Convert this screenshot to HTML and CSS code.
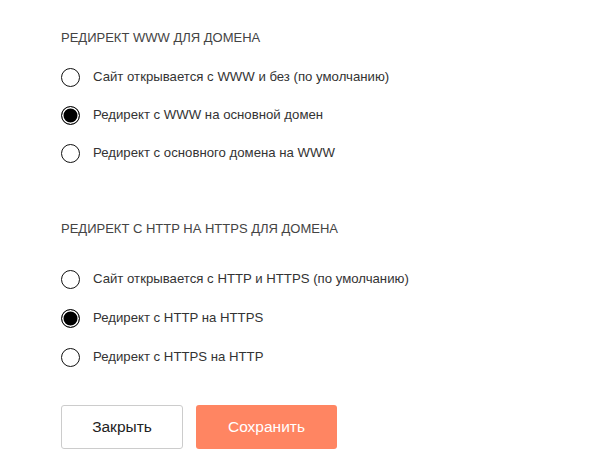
FILE: index.html
```html
<!DOCTYPE html>
<html lang="ru">
<head>
<meta charset="utf-8">
<link rel="stylesheet" href="styles.css">
</head>
<body>
<div class="form">
  <section class="group group-www">
    <h3 class="title">РЕДИРЕКТ WWW ДЛЯ ДОМЕНА</h3>
    <div class="options">
      <label class="option"><span class="radio"></span><span class="label">Сайт открывается с WWW и без (по умолчанию)</span></label>
      <label class="option"><span class="radio checked"></span><span class="label">Редирект с WWW на основной домен</span></label>
      <label class="option"><span class="radio"></span><span class="label">Редирект с основного домена на WWW</span></label>
    </div>
  </section>
  <section class="group group-https">
    <h3 class="title">РЕДИРЕКТ С HTTP НА HTTPS ДЛЯ ДОМЕНА</h3>
    <div class="options">
      <label class="option"><span class="radio"></span><span class="label">Сайт открывается с HTTP и HTTPS (по умолчанию)</span></label>
      <label class="option"><span class="radio checked"></span><span class="label">Редирект с HTTP на HTTPS</span></label>
      <label class="option"><span class="radio"></span><span class="label">Редирект с HTTPS на HTTP</span></label>
    </div>
  </section>
  <div class="actions">
    <button class="btn btn-close">Закрыть</button>
    <button class="btn btn-save">Сохранить</button>
  </div>
</div>
</body>
</html>
```
FILE: styles.css
```css
html, body {
  margin: 0;
  padding: 0;
  background: #fff;
}
body {
  font-family: "Liberation Sans", Arial, sans-serif;
  color: #333;
}
.form {
  padding: 29px 0 0 61px;
  display: flex;
  flex-direction: column;
}
.title {
  margin: 0;
  font-weight: normal;
  font-size: 13px;
  line-height: 18px;
  color: #444;
}
.options {
  display: flex;
  flex-direction: column;
  gap: 18px;
}
.group-www .options {
  margin-top: 20px;
}
.group-https {
  margin-top: 57px;
}
.group-https .options {
  margin-top: 31px;
  gap: 19px;
}
.option {
  display: flex;
  align-items: center;
  gap: 13px;
  height: 20px;
}
.radio {
  box-sizing: border-box;
  width: 19px;
  height: 19px;
  border: 1.5px solid #111;
  border-radius: 50%;
  background: #fff;
  flex: none;
}
.radio.checked {
  background: #000;
  box-shadow: inset 0 0 0 1.5px #fff;
}
.label {
  font-size: 13.2px;
  line-height: 18px;
  color: #333;
}
.actions {
  display: flex;
  gap: 13px;
  margin-top: 38px;
}
.btn {
  box-sizing: border-box;
  height: 44px;
  border-radius: 3px;
  font-family: "Liberation Sans", Arial, sans-serif;
  font-size: 15.5px;
  cursor: pointer;
}
.btn-close {
  width: 122px;
  background: #fff;
  border: 1px solid #ccc;
  color: #222;
}
.btn-save {
  width: 141px;
  background: #ff8562;
  border: none;
  color: #fff;
}
```
